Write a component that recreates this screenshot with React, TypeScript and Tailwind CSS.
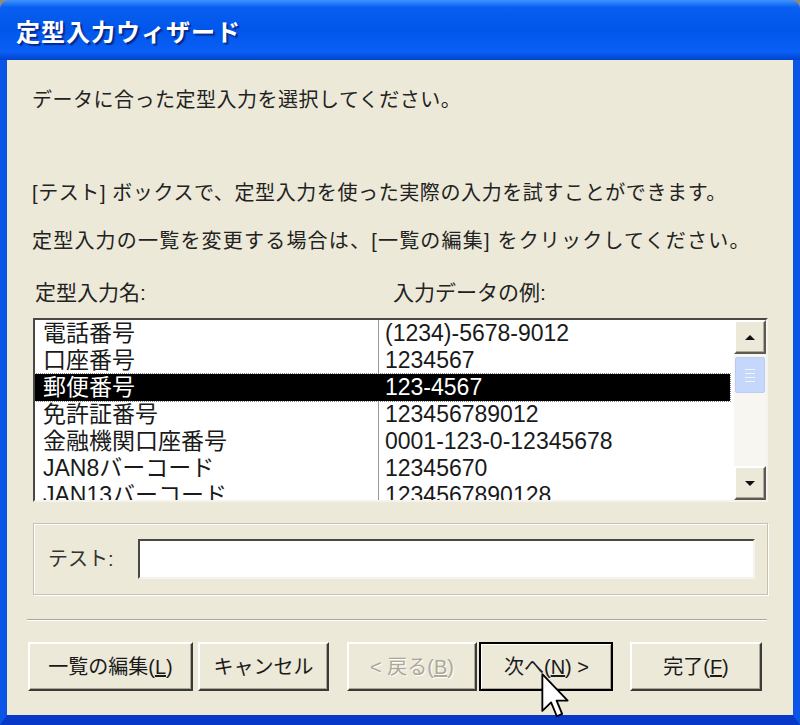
import React from 'react';

const rows = [
  { name: '電話番号', sample: '(1234)-5678-9012' },
  { name: '口座番号', sample: '1234567' },
  { name: '郵便番号', sample: '123-4567', selected: true },
  { name: '免許証番号', sample: '123456789012' },
  { name: '金融機関口座番号', sample: '0001-123-0-12345678' },
  { name: 'JAN8バーコード', sample: '12345670' },
  { name: 'JAN13バーコード', sample: '1234567890128' },
];

const btn =
  'flex h-[49px] items-center justify-center border-2 border-t-white border-l-white border-b-[#3a3a36] border-r-[#3a3a36] bg-[#ece9d8] text-[20px] text-[#1a1a1a] shadow-[inset_-1px_-1px_0_#aca899]';

function ScrollArrow({ down }: { down?: boolean }) {
  return (
    <div className="flex h-[34px] items-center justify-center border-2 border-t-white border-l-white border-b-[#5d5b52] border-r-[#5d5b52] bg-[#ece9d8] shadow-[inset_-1px_-1px_0_#aca899]">
      <svg width="12" height="7" viewBox="0 0 12 7">
        {down ? <path d="M1 1h10L6 6z" fill="#111" /> : <path d="M1 6h10L6 1z" fill="#111" />}
      </svg>
    </div>
  );
}

function App() {
  return (
    <div className="relative h-[725px] w-[800px] bg-[#8e8b7d] font-['Liberation_Sans','Noto_Sans_CJK_JP',sans-serif]">
      <div className="flex h-full flex-col overflow-hidden rounded-t-[9px]">
        {/* title bar */}
        <div className="flex h-[60px] shrink-0 items-center bg-[linear-gradient(180deg,#3f93ff_0%,#0a5ff2_12%,#0055ea_50%,#0a60f6_86%,#0043cc_100%)] pl-[16px] pt-[6px]">
          <span className="text-[24px] font-bold tracking-[1px] text-white [text-shadow:2px_2px_1px_#0a2a8a]">
            定型入力ウィザード
          </span>
        </div>

        {/* client area */}
        <div className="flex flex-1 flex-col border-x-[7px] border-b-[10px] border-x-[#0a55e6] border-b-[#0838c8] bg-[#ece9d8] text-[#222]">
          <p className="ml-[25px] mt-[27px] text-[20px] leading-[26px] tracking-[0.5px]">
            データに合った定型入力を選択してください。
          </p>
          <p className="ml-[25px] mt-[67px] text-[20px] leading-[26px] tracking-[0.6px]">
            [テスト] ボックスで、定型入力を使った実際の入力を試すことができます。
          </p>
          <p className="ml-[25px] mt-[22px] text-[20px] leading-[26px] tracking-[1.2px]">
            定型入力の一覧を変更する場合は、[一覧の編集] をクリックしてください。
          </p>

          <div className="ml-[28px] mt-[26px] flex text-[21px] leading-[26px]">
            <span className="w-[358px]">定型入力名:</span>
            <span>入力データの例:</span>
          </div>

          {/* list */}
          <div className="ml-[26px] mt-[12px] flex h-[184px] w-[735px] border-2 border-t-[#4a4842] border-l-[#4a4842] border-b-[#f4f3ee] border-r-[#f4f3ee] bg-white">
            <div className="relative flex-1 overflow-hidden">
              <div className="absolute bottom-0 left-[343px] top-0 w-px bg-[#9c9a90]" />
              {rows.map((r) => (
                <div
                  key={r.name}
                  className={
                    'relative mr-[4px] flex h-[27px] items-center text-[23px] ' +
                    (r.selected ? 'bg-black text-white outline-1 outline-dotted outline-[#888]' : 'text-[#1a1a1a]')
                  }
                >
                  <span className="w-[350px] pl-[8px]">{r.name}</span>
                  <span>{r.sample}</span>
                </div>
              ))}
            </div>
            <div className="flex w-[32px] flex-col bg-[#f7f6f1]">
              <ScrollArrow />
              <div className="mx-[1px] mt-[3px] flex h-[36px] flex-col items-center justify-center gap-[3px] rounded-[2px] border border-[#b8ccf5] bg-[#c6d7fc]">
                <div className="h-px w-[10px] bg-[#eef3ff]" />
                <div className="h-px w-[10px] bg-[#eef3ff]" />
                <div className="h-px w-[10px] bg-[#eef3ff]" />
                <div className="h-px w-[10px] bg-[#eef3ff]" />
              </div>
              <div className="flex-1" />
              <ScrollArrow down />
            </div>
          </div>

          {/* test group */}
          <div className="ml-[26px] mt-[21px] flex h-[72px] w-[735px] items-center border border-[#c5c2b2] pl-[14px] shadow-[inset_1px_1px_0_#fff,1px_1px_0_#fff]">
            <span className="w-[90px] text-[20px] text-[#333]">テスト:</span>
            <div className="h-[40px] w-[617px] border-2 border-t-[#4a4842] border-l-[#4a4842] border-b-[#f4f3ee] border-r-[#f4f3ee] bg-white" />
          </div>

          {/* separator */}
          <div className="ml-[20px] mt-[24px] h-[2px] w-[740px] border-t border-b border-t-[#aca899] border-b-white" />

          {/* buttons */}
          <div className="ml-[21px] mt-[21px] flex">
            <div className={btn + ' w-[165px]'}>
              一覧の編集(<u>L</u>)
            </div>
            <div className={btn + ' ml-[5px] w-[131px]'}>キャンセル</div>
            <div className={btn + ' ml-[18px] w-[130px] text-[#aca899] [text-shadow:1px_1px_0_#fff]'}>
              &lt; 戻る(<u>B</u>)
            </div>
            <div className="ml-[2px] flex h-[49px] w-[134px] border-2 border-black">
              <div className="flex flex-1 items-center justify-center border-t border-l border-t-white border-l-white bg-[#ece9d8] text-[20px] text-[#1a1a1a] shadow-[inset_-1px_-1px_0_#aca899]">
                次へ(<u>N</u>) &gt;
              </div>
            </div>
            <div className={btn + ' ml-[17px] w-[132px]'}>
              完了(<u>F</u>)
            </div>
          </div>
        </div>
      </div>

      {/* mouse cursor */}
      <svg className="absolute left-[541px] top-[673px]" width="28" height="46" viewBox="0 0 12 20">
        <path d="M0.5 0.5V16.5L4.3 12.8L6.8 18.8L9.1 17.8L6.7 12H11.5Z" fill="white" stroke="black" strokeWidth="0.8" strokeLinejoin="round" />
      </svg>
    </div>
  );
}

export default App;
